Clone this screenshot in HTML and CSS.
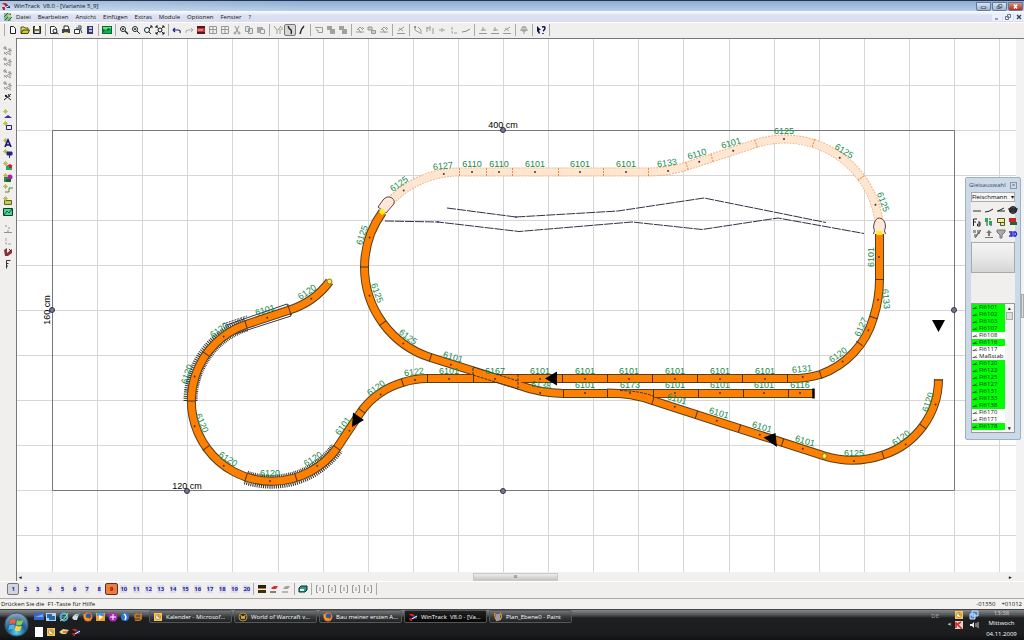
FILE: index.html
```
<!DOCTYPE html>
<html lang="de">
<head>
  <meta charset="UTF-8">
  <meta name="viewport" content="width=device-width, initial-scale=1.0">
  <title>WinTrack V8.0 - [Variante 5_9]</title>
  <link rel="stylesheet" href="styles.css">
</head>
<body>
  <header class="titlebar">
    <span class="icon" data-icon="app"></span>
    <h1>WinTrack&nbsp; V8.0 - [Variante 5_9]</h1>
    <div class="window-buttons">
      <button aria-label="Minimieren"><svg viewBox="0 0 14 9"><path d="M4 5h6v2H4z" fill="#fff" stroke="#445"/></svg></button>
      <button aria-label="Wiederherstellen"><svg viewBox="0 0 14 9"><path d="M6 2h4v4H6zM4 4h4v3H4z" fill="#fff" stroke="#445"/></svg></button>
      <button class="close" aria-label="Schließen"><svg viewBox="0 0 14 9"><path d="M5 2l4 5M9 2l-4 5" stroke="#fff" stroke-width="2"/></svg></button>
    </div>
  </header>

  <nav class="menubar">
    <span class="icon" data-icon="doc"></span>
    <a href="#">Datei</a>
    <a href="#">Bearbeiten</a>
    <a href="#">Ansicht</a>
    <a href="#">Einfügen</a>
    <a href="#">Extras</a>
    <a href="#">Module</a>
    <a href="#">Optionen</a>
    <a href="#">Fenster</a>
    <a href="#">?</a>
    <div class="mdi-buttons">
      <button aria-label="Fenster minimieren"><svg viewBox="0 0 10 8"><path d="M3 6h3" stroke="#456"/></svg></button>
      <button aria-label="Fenster wiederherstellen"><svg viewBox="0 0 10 8"><path d="M4.500 1.500h3v3h-3zM2.500 3.500h3v3h-3z" fill="#eef" stroke="#678"/></svg></button>
      <button aria-label="Fenster schließen"><svg viewBox="0 0 10 8"><path d="M3 2l4 4M7 2l-4 4" stroke="#345" stroke-width="1.300"/></svg></button>
    </div>
  </nav>

  <div class="toolbar" id="toolbar"></div>

  <main class="workspace">
    <div class="sidebar" id="sidebar"></div>
    <div class="view">
      <svg class="plan" viewBox="17 39 999 533" preserveAspectRatio="xMinYMin slice">
        <path id="grid" class="grid"/>
        <path class="frame" d="M52.500 130.500H954.500V490.500H52.500Z"/>

        <!-- Tunnelstrecke -->
        <g class="tunnel">
          <path class="edge" d="M387 205A95 95 0 0 1 459 172H648A125 125 0 0 0 687 166L756 143.500A95 95 0 0 1 879.500 226"/>
          <path class="fill" d="M387 205A95 95 0 0 1 459 172H648A125 125 0 0 0 687 166L756 143.500A95 95 0 0 1 879.500 226"/>
        </g>

        <!-- Böschung und Brücke -->
        <path class="slope" d="M190.500 401A80.500 80.500 0 0 1 246 324.500M246 477.500A80.500 80.500 0 0 0 337 448"/>
        <path class="bridge" d="M225 325.500L287 304L290 306M235 334L291 316L290 313"/>
        <path class="bridge" d="M223 324l24-8M287 305l5 11" stroke-dasharray="2 1"/>

        <g class="track">
          <path class="edge" d="M607 393Q632 393 652.500 400.500L824.500 456A95 95 0 0 0 883 455A80 80 0 0 0 938.500 379"/>
          <path class="edge" d="M382.500 212A95 95 0 0 0 364.500 267A95 95 0 0 0 430.500 357.500L518 385Q540 393 563.500 393.500H813"/>
          <path class="edge" d="M879.500 233V279.500A125 125 0 0 1 873.500 317.500A85 85 0 0 1 820.500 374.500A107 107 0 0 1 787.500 378.500H427.500A80 80 0 0 0 402.500 382.500A80 80 0 0 0 361.500 411L337 448A80.500 80.500 0 1 1 246 324.500L289.500 310A80 80 0 0 0 329.500 281.500"/>
          <path class="fill" d="M607 393Q632 393 652.500 400.500L824.500 456A95 95 0 0 0 883 455A80 80 0 0 0 938.500 379"/>
          <path class="fill" d="M382.500 212A95 95 0 0 0 364.500 267A95 95 0 0 0 430.500 357.500L518 385Q540 393 563.500 393.500H813"/>
          <path class="fill" d="M879.500 233V279.500A125 125 0 0 1 873.500 317.500A85 85 0 0 1 820.500 374.500A107 107 0 0 1 787.500 378.500H427.500A80 80 0 0 0 402.500 382.500A80 80 0 0 0 361.500 411L337 448A80.500 80.500 0 1 1 246 324.500L289.500 310A80 80 0 0 0 329.500 281.500"/>
        </g>
        <path class="switch" d="M473 367l45 14M473 375l45 14M473 375l0-8M518 374v14M620 390.500Q640 391 653 396"/>
        <path class="terrain" d="M447 208l69 9l102-6l86-13l122 24.500"/>
        <path class="terrain" d="M385 221l53 1l81 9.500l113-9.500l70 7.500l76-11.500l86 15.500"/>
        <circle cx="438" cy="222" r="1" fill="#33a"/>
        <circle cx="516" cy="217" r="1" fill="#33a"/>

        <g id="joints" class="joints"></g>
        <g id="labels" class="labels"></g>

        <g class="portal">
          <path d="M378 207l5-7q4-5 9-2q4 3 1 7l-7 8z"/>
          <path d="M873.500 234q2-3 0-7q1-9 6-9q6 1 6 9q-2 4 0 7"/>
        </g>
        <path d="M379 212l3-4l4 4l-4 3zM876 231h7l-1 4h-5z" fill="#ffee20"/>
        <circle class="end" cx="329.500" cy="281.500" r="2.500"/>
        <circle class="end" cx="824.500" cy="456" r="2.500"/>
        <path d="M545 378.500l12-7v14zM353 412.500l11 7.500l-12 7zM763.500 437.500l12-4.500l1.500 14zM932 320h13l-6.500 12z"/>
        <path d="M813.500 388.500v10" stroke="#000" stroke-width="2.500"/>
        <g class="handles">
          <circle cx="503" cy="130" r="2.500"/>
          <circle cx="503" cy="491" r="2.500"/>
          <circle cx="187" cy="491" r="2.500"/>
          <circle cx="52" cy="310" r="2.500"/>
          <circle cx="954" cy="310" r="2.500"/>
        </g>
        <g class="dims">
          <text x="503" y="128">400 cm</text>
          <text x="187" y="489">120 cm</text>
          <text transform="translate(50 310) rotate(-90)">160 cm</text>
        </g>
      </svg>
      <div class="vscroll"><i></i></div>
      <div class="hscroll"><b>◂</b><i>III</i><b>▸</b></div>
    </div>

    <section class="palette">
      <div class="palette-title"><h2>Gleisauswahl</h2><button aria-label="Auswahl schließen">×</button></div>
      <div class="palette-body">
        <div class="combo">
          <select aria-label="Gleissystem"><option>Fleischmann F</option></select>
        </div>
        <div class="palette-tools" id="paletteTools"></div>
        <div class="preview"></div>
        <div class="list">
          <ul id="trackList"></ul>
          <div class="list-scroll"><b>▴</b><i></i><b>▾</b></div>
        </div>
      </div>
    </section>
  </main>

  <div class="toolbar layers">
    <div class="layer-buttons" id="layerButtons"></div>
    <div class="tool-group" id="layerTools"></div>
  </div>

  <footer class="status">
    <span>Drücken Sie die &nbsp;F1-Taste für Hilfe</span>
    <span class="coord">-01350</span>
    <span class="coord">+01012</span>
  </footer>

  <div class="taskbar">
    <button class="start" aria-label="Start">
      <svg viewBox="0 0 24 24">
        <defs><radialGradient id="orb" cx="50%" cy="85%" r="80%"><stop offset="0" stop-color="#4fd8f8"/><stop offset=".5" stop-color="#1c5f94"/><stop offset="1" stop-color="#8aa4b8"/></radialGradient></defs>
        <circle cx="12" cy="12" r="11" fill="url(#orb)" stroke="#385870"/>
        <path d="M6 8q3-2 5.500-.500l-1 4q-2.500-1-5.500.500z" fill="#f06030"/>
        <path d="M12.500 8q3 1.500 6-.500l-1.500 4.500q-2.500 1.500-5.500 0z" fill="#90d040"/>
        <path d="M5 13q3-1.500 5.500-.500l-1 4.500q-3-1.500-5.500.500z" fill="#50b0f0"/>
        <path d="M11.500 13q2.500 1.500 5.500.500l-1.500 4.500q-3 1-5.500-.500z" fill="#ffd040"/>
      </svg>
    </button>
    <div class="quick" id="quick"></div>
    <div class="tasks">
      <button><span class="icon" data-icon="outlook"></span><span>Kalender - Microsof...</span></button>
      <button><span class="icon" data-icon="wow"></span><span>World of Warcraft v...</span></button>
      <button><span class="icon" data-icon="firefox"></span><span>Bau meiner ersten A...</span></button>
      <button class="active"><span class="icon" data-icon="app"></span><span>WinTrack&nbsp; V8.0 - [Va...</span></button>
      <button><span class="icon" data-icon="paint"></span><span>Plan_Ebene0 - Paint</span></button>
    </div>
    <span class="lang">DE</span>
    <button class="tray-more" aria-label="Weitere Symbole">&lt;</button>
    <div class="tray">
      <span class="icon" data-icon="outlook"></span>
      <span class="icon" data-icon="net"></span>
      <span class="icon" data-icon="av"></span>
      <span class="icon" data-icon="sound"></span>
    </div>
    <div class="clock"><span>13:38</span><span>Mittwoch</span><span>04.11.2009</span></div>
  </div>
  <script src="script.js"></script>
</body>
</html>
```
FILE: styles.css
```
:root {
  --face: #f0efee;
  --line: #a9a9a9;
  --track: #ff8000;
}
* {
  box-sizing: border-box;
}
body {
  margin: 0;
  height: 100vh;
  display: flex;
  flex-direction: column;
  overflow: hidden;
  background: var(--face);
  color: #111;
  font-family: "Open Sans", sans-serif;
  font-size: 6px;
  line-height: 8px;
}
button {
  font: inherit;
  padding: 0;
  border: none;
  background: none;
  color: inherit;
}
h1, h2 {
  margin: 0;
  font-size: inherit;
  font-weight: normal;
}
svg {
  display: block;
}
.icon svg {
  width: 10px;
  height: 10px;
}
.titlebar {
  display: flex;
  align-items: center;
  gap: 3px;
  height: 11px;
  padding: 0 1px;
  border-top: 1px solid #27344f;
  background: linear-gradient(90deg, rgba(255,255,255,0.3), transparent 30%), linear-gradient(#8eabd0, #b4cfea);
}
.window-buttons {
  display: flex;
  gap: 1px;
  margin-left: auto;
}
.window-buttons button {
  width: 15px;
  height: 9px;
  border: 1px solid #60789a;
  border-radius: 0 0 2px 2px;
  background: linear-gradient(#d5e2f1, #9eb7d2);
}
.window-buttons .close {
  background: linear-gradient(#dd9383, #b52c18);
}
.window-buttons svg {
  width: 100%;
  height: 100%;
}
.menubar {
  display: flex;
  align-items: center;
  gap: 7px;
  height: 11px;
  padding-left: 3px;
  background: linear-gradient(#fff, #dbe0f2 40%, #d8ddef);
}
.menubar .icon {
  margin-right: -4px;
}
.menubar a {
  color: #111;
  text-decoration: none;
}
.mdi-buttons {
  display: flex;
  gap: 1px;
  margin-left: auto;
}
.mdi-buttons button {
  width: 10px;
  height: 8px;
  background: #e9f0fa;
}
.toolbar {
  display: flex;
  align-items: center;
  height: 16px;
  padding: 0 0 1px 4px;
  border-top: 1px solid #fff;
}
.tool-group {
  display: flex;
  padding: 0 2px;
  border-left: 1px solid var(--line);
}
.toolbar > .tool-group:last-child {
  border-right: 1px solid var(--line);
}
.tool {
  display: flex;
  align-items: center;
  justify-content: center;
  width: 12px;
  height: 12px;
}
.tool svg {
  width: 10px;
  height: 10px;
}
.tool.off {
  filter: grayscale(1);
  opacity: 0.5;
}
.tool.pressed {
  border: 1px solid #777;
  border-radius: 2px;
  background: #d7d7d7;
}
.workspace {
  flex: 1;
  display: flex;
  min-height: 0;
  position: relative;
}
.sidebar {
  display: flex;
  flex-direction: column;
  gap: 5px;
  width: 16px;
  padding: 7px 0 0 1px;
}
.side-group {
  display: flex;
  flex-direction: column;
}
.side-group .tool {
  flex: 1;
  width: 14px;
  min-height: 0;
}
.g1 { height: 58px; }
.g2 { height: 24px; }
.g3 { height: 81px; }
.g4 { height: 47px; }
.view {
  flex: 1;
  display: grid;
  grid-template-columns: 1fr 8px;
  grid-template-rows: 1fr 9px;
  min-width: 0;
  border-top: 1px solid #777;
  border-left: 1px solid #777;
}
.plan {
  width: 100%;
  height: 100%;
  min-height: 0;
  background: #fff;
}
.grid {
  fill: none;
  stroke: #d6d6d6;
}
.frame {
  fill: none;
  stroke: #777;
}
.track path, .tunnel path {
  fill: none;
}
.track .edge {
  stroke: #54401f;
  stroke-width: 9;
}
.track .fill {
  stroke: var(--track);
  stroke-width: 7;
}
.tunnel .edge {
  stroke: #f5b48a;
  stroke-width: 9;
  stroke-dasharray: 2 1;
}
.tunnel .fill {
  stroke: #ffe6d0;
  stroke-width: 7;
}
.slope {
  fill: none;
  stroke: #333;
  stroke-width: 14;
  stroke-dasharray: 1 1;
}
.bridge, .switch, .terrain {
  fill: none;
  stroke: #334;
}
.switch {
  stroke-dasharray: 3 1;
}
.terrain {
  stroke-dasharray: 9 1;
}
.joints line {
  stroke: #432;
}
.joints .hidden {
  stroke: #ee8844;
  stroke-dasharray: 2 1;
}
.labels text {
  font: 9px "Liberation Sans", sans-serif;
  fill: #14894a;
  text-anchor: middle;
}
.labels circle {
  fill: #433;
}
.portal path {
  fill: #ffe8da;
  stroke: #544;
}
.end {
  fill: #ffee20;
  stroke: #775;
}
.handles circle {
  fill: #77779a;
  stroke: #334;
}
.dims text {
  font: 9px "Liberation Sans", sans-serif;
  text-anchor: middle;
}
.vscroll {
  display: flex;
  align-items: center;
  justify-content: flex-end;
  background: #f3f3f3;
}
.vscroll i {
  width: 3px;
  height: 24px;
  border: 1px solid #aaa;
  background: #ddd;
}
.hscroll {
  grid-column: 1 / 3;
  display: flex;
  align-items: center;
  justify-content: space-between;
  padding: 0 12px 0 2px;
  background: #f0f0f0;
}
.hscroll i {
  width: 85px;
  height: 8px;
  border: 1px solid #c8c8c8;
  background: linear-gradient(#eee, #c4c4c4);
  font-style: normal;
  font-size: 4px;
  line-height: 6px;
  text-align: center;
}
.hscroll b {
  font-size: 5px;
}
.palette {
  position: absolute;
  top: 139px;
  right: 3px;
  width: 56px;
  height: 263px;
  padding: 0 5px 6px;
  display: flex;
  flex-direction: column;
  border: 1px solid #9fb0c4;
  border-radius: 2px;
  background: #cbd9e9;
}
.palette-title {
  display: flex;
  align-items: center;
  justify-content: space-between;
  height: 14px;
  margin: 0 -2px;
  color: #445;
}
.palette-title button {
  width: 7px;
  height: 7px;
  border: 1px solid #8896a8;
  line-height: 5px;
}
.palette-body {
  flex: 1;
  display: flex;
  flex-direction: column;
  min-height: 0;
  background: var(--face);
}
.combo {
  position: relative;
}
.combo::after {
  content: "▾";
  position: absolute;
  right: 1px;
  top: 1px;
}
.combo select {
  display: block;
  appearance: none;
  width: 100%;
  height: 10px;
  padding: 0 6px 0 0;
  border: 1px solid #aaa;
  border-radius: 0;
  background: #f5f5f5;
  font: inherit;
  overflow: hidden;
}
.palette-tools {
  display: grid;
  grid-template-columns: repeat(4, 1fr);
  justify-items: center;
  padding-top: 2px;
}
.preview {
  height: 31px;
  margin-top: 2px;
  border: 1px solid #aaa;
  background: linear-gradient(#f4f4f4, #e8e8e8 50%, #d5d5d5);
}
.list {
  flex: 1;
  display: flex;
  min-height: 0;
  margin-top: 30px;
  border: 1px solid #999;
  background: #fff;
}
.list ul {
  flex: 1;
  margin: 0;
  padding: 0;
  list-style: none;
  overflow: hidden;
}
.list li {
  display: flex;
  align-items: center;
  gap: 1px;
  height: 7px;
  line-height: 7px;
}
.list li svg {
  width: 6px;
  height: 6px;
}
.list .used {
  background: #0f0;
  color: #032;
}
.list-scroll {
  display: flex;
  flex-direction: column;
  align-items: center;
  width: 9px;
  background: #f4f4f4;
}
.list-scroll i {
  width: 7px;
  height: 8px;
  margin-bottom: auto;
  border: 1px solid #aaa;
  background: #ddd;
}
.list-scroll b {
  font-size: 5px;
}
.layers {
  height: 17px;
  padding-bottom: 2px;
}
.layers .tool-group {
  border-right: 0;
}
.layer-buttons {
  display: grid;
  grid-template-columns: repeat(20, 1fr);
  width: 246px;
  margin-left: 3px;
}
.layer-buttons button {
  height: 12px;
  border: 1px solid transparent;
  border-radius: 2px;
  color: #2424a0;
  font-weight: bold;
  line-height: 9px;
}
.layer-buttons button span {
  background: #dcdcec;
}
.layer-buttons .shown {
  border-color: #777;
  background: #d4d4e0;
}
.layer-buttons .current {
  border-color: #533;
  background: #f07c3c;
  color: #900;
}
.layer-buttons .current span, .layer-buttons .shown span {
  background: none;
}
.status {
  display: flex;
  align-items: center;
  gap: 6px;
  height: 11px;
  padding: 0 2px 0 1px;
  border-top: 1px solid #aaa;
  background: #f2f1f0;
}
.status .coord:nth-child(2) {
  margin-left: auto;
}
.taskbar {
  display: flex;
  height: 31px;
  padding-left: 4px;
  border-top: 1px solid #444;
  background: linear-gradient(#85898b, #505355 5px, #1d1f21 8px, #1b1d1f 80%, #101112);
  color: #fff;
}
.start {
  width: 25px;
  height: 25px;
  margin-top: 2px;
}
.quick {
  display: grid;
  grid-template-columns: repeat(9, 1fr);
  grid-auto-rows: 15px;
  justify-items: center;
  align-items: center;
  width: 111px;
  margin: -1px 0 0 4px;
}
.tasks {
  display: flex;
  align-items: flex-start;
  gap: 2px;
  margin-left: 5px;
}
.tasks button {
  display: flex;
  align-items: center;
  gap: 3px;
  width: 83px;
  height: 13px;
  padding-left: 3px;
  border: 1px solid #55585a;
  border-radius: 2px;
  background: linear-gradient(#737678, #3b3d3f 50%, #202224);
  white-space: nowrap;
}
.tasks .active {
  background: linear-gradient(#222, #050505);
}
.lang {
  margin: 2px 8px 0 auto;
  color: #a4a4a4;
}
.tray-more {
  width: 5px;
  height: 8px;
  margin: 10px 2px 0 0;
  font-weight: bold;
  line-height: 8px;
}
.tray {
  display: grid;
  grid-template-columns: 15px 15px;
  grid-auto-rows: 10px;
}
.clock {
  display: flex;
  flex-direction: column;
  gap: 3px;
  align-items: center;
  width: 35px;
  margin-right: 5px;
}
.clock span:first-child {
  color: #d4d4d4;
  line-height: 6px;
}
```
FILE: script.js
```
// icons, drawn on a 10 x 10 field
const spark = '<path d="M0 2.500h5M2.500 0v5M1 1l3 3M4 1L1 4" stroke="#b4b838" stroke-width=".8"/>';
const icons = {
  app: '<path d="M1 2h4l2 2H3z" fill="#d22"/><path d="M4 4h5v3H5z" fill="#223a8c"/><path d="M2 8l7-4" stroke="#fff"/><path d="M1 6h3v3H2z" fill="#b22"/>',
  doc: '<path d="M1 1h7v8H1z" fill="#8ab89a"/><path d="M2 8l6-6M1 5l4-4M5 9l4-4" stroke="#174"/><path d="M5 3h3v2H5z" fill="#ec3"/>',
  new: '<path d="M2.500 1.500h3l2 2v5h-5z" fill="#fff" stroke="#222"/>',
  open: '<path d="M1 8V2h3l1 1h3v2" fill="#dd7" stroke="#551"/><path d="M1 8.500L3 5h6.500L8 8.500z" fill="#cc3" stroke="#440"/>',
  save: '<path d="M1.500 1.500h7v7h-7z" fill="#78763c" stroke="#222"/><path d="M3 1h4v3H3z" fill="#fff"/><path d="M3 6h4v2H3z" fill="#dde"/>',
  preview: '<path d="M1.500 1.500h4l2 2v5h-6z" fill="#fff" stroke="#333"/><circle cx="6" cy="6" r="2" fill="#dff" stroke="#222"/><path d="M7 7l2.500 2" stroke="#222"/>',
  print: '<path d="M3 4V1h4l1 3" fill="#fff" stroke="#222"/><path d="M1 4h8v4H1z" fill="#444"/><path d="M3 7h4v1H3z" fill="#cc4"/>',
  copyview: '<path d="M1.500 4.500h5v4h-5z" fill="#fff" stroke="#333"/><path d="M3 3h4l2 5M5 1h3v3" fill="none" stroke="#345"/>',
  book: '<path d="M2 1h6v8H2z" fill="#35386c"/><path d="M4 2h3v2H4zM4 5h3v2H4z" fill="#b8bce8"/>',
  picture: '<path d="M0 1h10v8H0z" fill="#086838"/><path d="M1 2h8v2L6 3 4 5 1 4z" fill="#5eea80"/><path d="M1 7l3-2 2 1 3-2v4H1z" fill="#18b048"/>',
  zoomout: '<circle cx="4" cy="4" r="2.500" fill="#eff" stroke="#222"/><path d="M3 4h2M6 6l3 3" stroke="#222" stroke-width="1.400"/>',
  zoomin: '<circle cx="4" cy="4" r="2.500" fill="#eff" stroke="#222"/><path d="M3 4h2M4 3v2M6 6l3 3" stroke="#222"/>',
  zoomwin: '<circle cx="4" cy="5" r="2.500" fill="#eff" stroke="#222"/><path d="M6 7l2 2M7 1h2v2M6 4l3-3" fill="none" stroke="#222"/>',
  zoomall: '<path d="M1 1l8 8M9 1L1 9M1 3V1h2M7 1h2v2M1 7v2h2M9 7v2H7" stroke="#222" fill="none"/><circle cx="5" cy="5" r="2" fill="#eee" stroke="#222"/>',
  undo: '<path d="M1 5h5q3 0 2 3M1 5l2-2M1 5l2 2" fill="none" stroke="#228" stroke-width="1.200"/>',
  redo: '<path d="M9 5H4q-3 0-2 3M9 5L7 3M9 5L7 7" fill="none" stroke="#666"/>',
  trackset: '<path d="M1 1h8v8H1z" fill="#b33"/><path d="M1 2h8M1 8h8" stroke="#311" stroke-width="1.500"/><path d="M2 5h5" stroke="#fcc"/>',
  table: '<path d="M1.500 1.500h7v7h-7zM1 4.500h8M5 1v8" fill="none" stroke="#444"/>',
  cut: '<path d="M3 1l3 6M7 1L4 7" stroke="#333"/><circle cx="3" cy="8" r="1" fill="none" stroke="#333"/><circle cx="7" cy="8" r="1" fill="none" stroke="#333"/>',
  copy: '<path d="M1.500 1.500h4v5h-4zM4.500 3.500h4v5h-4z" fill="#ddd" stroke="#444"/>',
  paste: '<path d="M1 2h6v6H1z" fill="#666"/><path d="M4.500 4.500h4v4h-4z" fill="#eee" stroke="#444"/>',
  switchl: '<path d="M1 1l3 4v4M8 1L5 5M7 4v5M9 2v3" fill="none" stroke="#444"/>',
  curve: '<path d="M3 1q1 3 3 4q1 2 0 4" fill="none" stroke="#222" stroke-width="1.400"/>',
  curve2: '<path d="M3 9q1-5 4-8" fill="none" stroke="#222" stroke-width="1.400"/>',
  box: '<path d="M1 2.500h7.500v5H4V5H2" fill="none" stroke="#444"/>',
  stack: '<path d="M1 1h5v4H1zM4 4h5v5H4z" fill="#555"/>',
  mix: '<path d="M1 7h8M2 5l3-3 3 3M7 2l2 2M3 3l3 5" fill="none" stroke="#444"/>',
  mix2: '<path d="M1 2h4v3H1zM4.500 5.500h4v3h-4z" fill="#aaa" stroke="#444"/>',
  level: '<path d="M1 8.500h8M2 6l6-4M3 3l4 3" stroke="#444"/>',
  nodes: '<path d="M2 2v3l5 3M5 2l3 3v4" fill="none" stroke="#444"/><circle cx="2" cy="2" r="1"/>',
  poles: '<path d="M2 2v5M5 1v5M8 3v6M1 3h4" fill="none" stroke="#444"/>',
  cross: '<path d="M5 3v4M2 5h6" stroke="#555"/>',
  corner: '<path d="M3 2v6h5" fill="none" stroke="#555" stroke-dasharray="3 1"/>',
  profile: '<path d="M1 8.500h8M5 2v4M3 5h5" stroke="#444"/>',
  move: '<path d="M5 1v8M1 5h8M3 2h4v4H3z" fill="none" stroke="#444"/>',
  help: '<path d="M1 1l4 4-2 0 1 3-1 1-2-3z" fill="#115"/><path d="M6 2q3-1 3 1t-2 3M7 8v1" fill="none" stroke="#115" stroke-width="1.500"/>',
  star: '<path d="M0 2h4M2 0v4M1 1l3 3M5 3l4 2M4 7l4 2M7 2v6M1 6l3 3M1 8l7-4" stroke="#444"/>',
  pen: '<path d="M1 8L8 2M2 3l6 5M5 2l2 3" stroke="#222"/><circle cx="3" cy="4" r="1"/>',
  starline: spark + '<path d="M1 9l4-3 4 3z" fill="#33a"/>',
  starbox: spark + '<path d="M3.500 4.500h5v4h-5z" fill="#eee" stroke="#226"/>',
  text: spark + '<path d="M2 9L5 2l3 7M3 7h4" fill="none" stroke="#117" stroke-width="1.600"/>',
  pin: spark + '<path d="M4 3h5v3H4zM6.500 6v3" fill="#228" stroke="#228"/>',
  house: spark + '<path d="M3 5l4-2 3 2z" fill="#c22"/><path d="M3 5h6v4H3z" fill="#2a6"/><path d="M6 5h3v2H6z" fill="#c22"/>',
  flower: spark + '<path d="M1 4h5v5H1z" fill="#384"/><circle cx="7" cy="4" r="2.500" fill="#a2a"/><path d="M3 6h5v3H3z" fill="#163"/>',
  step: spark + '<path d="M2 8h4V4h4" fill="none" stroke="#583"/>',
  folder: '<path d="M1.500 4.500h7v4h-7z" fill="#cc4" stroke="#562"/>' + spark,
  map: '<path d="M.500 1.500h9v7h-9z" fill="#5c9" stroke="#042"/><path d="M1 8l3-4 2 2 3-4" fill="none" stroke="#063"/>',
  dots: '<path d="M3 1v2M6 3v2M1 8.500h8M5 6v2" stroke="#333"/>',
  brick: '<path d="M1 3l3-2v5l5-4v4L5 9H2z" fill="#833"/><path d="M6 2l2 2" stroke="#222"/>',
  ruler: '<path d="M3.500 9.500v-8h4M3.500 4.500h2M3.500 7h1.500" fill="none" stroke="#333"/>',
  straight: '<path d="M1 6h8" stroke="#333"/>',
  bend: '<path d="M1 7q4 0 8-3" fill="none" stroke="#222"/>',
  turnout: '<path d="M1 6h8M2 6l6-3" fill="none" stroke="#222"/>',
  turntable: '<circle cx="5" cy="5" r="3.500" fill="#555" stroke="#222"/><path d="M0 4h10M1 6h8" stroke="#111"/>',
  fa: '<path d="M1.500 9V2H5M1 5h3M6 5h2v4H5.500V7H8" fill="none" stroke="#222"/>',
  tree: '<path d="M1 1h3v4H1zM5 4h3v4H5z" fill="#2a5"/><path d="M3 5v4M7 8v1M5 2h2" stroke="#143"/>',
  windows: '<path d="M1.500 1.500h7v4h-7zM4.500 5.500h4v3h-4z" fill="#ee9" stroke="#552"/>',
  redgreen: '<path d="M1 1h7v4H1z" fill="#c22"/><path d="M2 5h7v3H2z" fill="#263"/>',
  brush: '<path d="M1 1h3v3H1zM5 1h3v4H5zM2 5h3v3H2z" fill="#999"/><path d="M3 9l6-8" stroke="#555"/>',
  up: '<path d="M1 8h8v1H1zM4 7V4H2l3-3 3 3H6v3z" fill="#777"/>',
  down: '<path d="M1 1h8v2L6 6v3H4V6L1 3z" fill="#aaa" stroke="#777"/>',
  three: '<path d="M1 3h3v4H1M2 5h2M6 3h1.500q2 2 0 4H6z" fill="none" stroke="#22c" stroke-width="1.400"/>',
  layers: '<path d="M1 1h8v3H1z" fill="#221"/><path d="M1 4h8v1H1z" fill="#d62"/><path d="M1 6h8v3H1z" fill="#331"/>',
  flag: '<path d="M2 4l3-2h4L7 5H3z" fill="#c33"/><path d="M1 8h6" stroke="#111"/>',
  cube: '<path d="M1 4l2-2h6v4L7 8H1z" fill="#2a9d8a" stroke="#123"/><path d="M2 5h4v2H2z" fill="#cfe"/>',
  brackets: '<path d="M3 1.500H1.500v7H3M7 1.500h1.500v7H7M5 3v4" fill="none" stroke="#444"/>',
  outlook: '<path d="M1 1h8v8H1z" fill="#f3c661"/><circle cx="5" cy="5" r="2.500" fill="#fff" stroke="#c80"/><path d="M5 3v2h2" stroke="#864" fill="none"/>',
  wow: '<circle cx="5" cy="5" r="4" fill="#332a18" stroke="#b8923c"/><path d="M3 3l1 4 1-3 1 3 1-4" fill="none" stroke="#e0b950"/>',
  firefox: '<circle cx="5" cy="5" r="4.500" fill="#f07818"/><circle cx="5.500" cy="4" r="2.500" fill="#2858b0"/><path d="M1 2q0 6 5 5" fill="none" stroke="#ffc030"/>',
  paint: '<path d="M3 2h4v6q-2 2-4 0z" fill="#99a"/><path d="M2 1q-1 4 2 8M7 1q3 3 0 7" fill="none" stroke="#e09a30" stroke-width="1.300"/>',
  net: '<path d="M3 1h6v5H3zM1 4h5v5H1z" fill="#3b91d0" stroke="#ddf"/>',
  av: '<path d="M1 1h8v8H1z" fill="#d6d6d6"/><path d="M2 2v6M2 5l5-3M3 4l5 5" stroke="#d22" stroke-width="1.600"/>',
  sound: '<path d="M1 4h2l2-2v6L3 6H1z" fill="#eee"/><path d="M7 3v4M9 2v6" stroke="#ccc"/>',
  desktop: '<path d="M0 1h10v7H0z" fill="#3468c8"/><path d="M1 5l8-3v3z" fill="#78a6f0"/>',
  switcher: '<path d="M0 1h10v8H0z" fill="#b8d4ec"/><path d="M1 2h5v4H1zM3 4h6v4H3z" fill="#2868a8"/>',
  ie: '<circle cx="5" cy="5" r="3.500" fill="none" stroke="#46b8ee" stroke-width="1.800"/><path d="M2 5h6" stroke="#46b8ee"/><path d="M1 9q6-2 8-8" stroke="#d8e050" fill="none"/>',
  bird: '<path d="M1 6q3-5 7-4L6 8H3z" fill="#d3dce8"/><path d="M5 4l4-3" stroke="#68a"/>',
  media: '<path d="M0 1h9v8H0z" fill="#f0a030"/><path d="M1 1h7v3H1z" fill="#4898d0"/><path d="M3 3l4 2-4 3z" fill="#fff"/>',
  magenta: '<circle cx="5" cy="5" r="4.500" fill="#b028b8"/><path d="M2 5h6M5 2v6" stroke="#fff"/>',
  globe: '<circle cx="5" cy="5" r="4" fill="#2c78d0"/><path d="M4 2q3 2 1 6" stroke="#fff" stroke-width="1.500" fill="none"/>',
  cat: '<path d="M1 3l2-2 3 1 3-1v6L7 9H2z" fill="#b87830"/><path d="M3 4h4M2 7h5" stroke="#331"/>',
  page: '<path d="M1 0h8v10H1z" fill="#fff"/>',
  fish: '<path d="M0 5l4-3 6 1-3 4H3z" fill="#e8d090"/><path d="M4 5h5" stroke="#b22"/>'
};

function svg(name) {
  return '<svg viewBox="0 0 10 10">' + icons[name] + '</svg>';
}

// a leading "-" is a disabled tool, a leading "!" a pressed one
function tool(entry) {
  const name = entry.replace(/^[-!]/, '');
  const state = entry[0] === '-' ? ' off' : entry[0] === '!' ? ' pressed' : '';
  return '<button class="tool' + state + '" aria-label="' + name + '">' + svg(name) + '</button>';
}

function tools(list) {
  return list.split(' ').map(tool).join('');
}

document.querySelectorAll('[data-icon]').forEach(el => {
  el.innerHTML = svg(el.dataset.icon);
});

document.getElementById('toolbar').innerHTML = [
  'new open save',
  'preview print copyview book',
  'picture',
  'zoomout zoomin zoomwin zoomall',
  'undo -redo trackset -table -table -cut -copy -paste',
  '-switchl !curve curve2',
  '-box -stack -stack',
  '-mix -mix2 -mix',
  '-level',
  '-nodes -poles -cross -corner -bend',
  '-profile -profile -level',
  '-move',
  'help'
].map(g => '<div class="tool-group">' + tools(g) + '</div>').join('');

document.getElementById('sidebar').innerHTML = [
  '-star -star -star -star pen',
  'starline starbox',
  'text pin house flower step folder map',
  '-dots -corner brick ruler'
].map((g, i) => '<div class="side-group g' + (i + 1) + '">' + tools(g) + '</div>').join('');

document.getElementById('paletteTools').innerHTML =
  tools('straight bend turnout turntable fa tree windows redgreen brush up down three');
document.getElementById('layerTools').outerHTML =
  ['layers flag -flag', 'cube', '-brackets -brackets -brackets -brackets -brackets']
    .map(g => '<div class="tool-group">' + tools(g) + '</div>').join('');

let layers = '';
for (let i = 1; i <= 20; i++) {
  const state = i === 1 ? 'shown' : i === 9 ? 'current' : '';
  layers += '<button class="' + state + '"><span>' + i + '</span></button>';
}
document.getElementById('layerButtons').innerHTML = layers;

document.getElementById('quick').innerHTML =
  'desktop switcher ie bird firefox media magenta globe cat page outlook fish app'.split(' ')
    .map(n => '<button class="tool" aria-label="' + n + '">' + svg(n) + '</button>').join('');

// track list, "*" = used in the plan
document.getElementById('trackList').innerHTML =
  ('*Fl6101 *Fl6102 *Fl6103 *Fl6107 Fl6108 *Fl6116 Fl6117 Maßstab *Fl6120 *Fl6122 *Fl6125 ' +
   '*Fl6127 *Fl6131 *Fl6133 *Fl6138 Fl6170 Fl6171 *Fl6178').split(' ')
    .map(n => '<li class="' + (n[0] === '*' ? 'used' : '') + '">' + svg('turnout') + n.replace('*', '') + '</li>').join('');

// grid
let d = '';
for (let i = -1; i < 22; i++) d += 'M' + Math.round(52 + i * 45.1) + '.5 39V640';
for (let i = -1; i < 10; i++) d += 'M0 ' + (130 + i * 45) + '.5H1100';
document.getElementById('grid').setAttribute('d', d);

// track numbers: x, y, angle, number
const labels = [
  [307,292,-33,6120], [265,310,-16,6101], [219,330,-36,6120], [187,374,-72,6120],
  [202,423,66,6120], [228,459,32,6120], [270,473,0,6120], [313,459,-32,6120],
  [343,426,-54,6101], [376,388,-36,6120], [414,372,-8,6122], [449,371,0,6101],
  [495,371,0,6167], [540,371,0,6101], [585,371,0,6101], [629,371,0,6101],
  [675,371,0,6101], [720,371,0,6101], [765,371,0,6101], [802,369,-6,6131],
  [838,355,-36,6120], [861,327,-66,6127], [886,299,84,6133], [871,257,-90,6101],
  [883,202,70,6125], [844,151,32,6125], [784,131,0,6125], [731,143,-16,6101],
  [697,154,-16,6110], [667,163,-8,6133], [626,164,0,6101], [580,164,0,6101],
  [535,164,0,6101], [499,164,0,6110], [472,164,0,6110], [443,166,-6,6127],
  [399,184,-36,6125], [362,235,-72,6125], [377,293,70,6125], [408,337,36,6125],
  [453,357,16,6101], [541,385,6,6138], [585,385,0,6101], [630,385,0,6173],
  [675,385,0,6101], [720,385,0,6101], [764,385,0,6101], [800,385,0,6116],
  [677,399,16,6101], [719,413,16,6101], [762,427,16,6101], [805,441,16,6101],
  [854,453,0,6125], [901,438,-36,6120], [928,402,-72,6120]
];
document.getElementById('labels').innerHTML = labels.map(([x, y, a, n]) =>
  '<g transform="translate(' + x + ' ' + y + ') rotate(' + a + ')"><text y="3">' + n + '</text><circle cy="8" r="1"/></g>').join('');

// joints between two tracks: x, y, direction of the track, 1 = in the tunnel
const joints = [
  [289.5,310,-18], [246,324.5,-18], [206,354,-54], [191,401,90], [206,448,54],
  [246,477.5,18], [296,477.5,-18], [337,448,-54], [362,411,-54], [402.5,382.5,-18],
  [427.5,378.5,0], [473.5,378.5,0], [562.5,378.5,0], [607.5,378.5,0], [652.5,378.5,0],
  [697.5,378.5,0], [742.5,378.5,0], [787.5,378.5,0], [820.5,374.5,-18], [859.5,343.5,-54],
  [873.5,317.5,-72], [879.5,279.5,90], [364.5,267,90], [383,323,54], [430.5,357.5,18],
  [563.5,393.5,0], [607.5,393.5,0], [653.5,393.5,0], [698.5,393.5,0], [743.5,393.5,0],
  [788.5,393.5,0], [653,400.5,18], [696.5,414.5,18], [739.5,428.5,18], [782.5,442.5,18],
  [883,455,-18], [923,426.5,-54], [938.5,380,90],
  [459.5,172,0,1], [486.5,172,0,1], [512.5,172,0,1], [558.5,172,0,1], [603.5,172,0,1],
  [648.5,172,0,1], [687,166,-18,1], [712,158,-18,1], [756,143.5,-18,1], [813.5,143,18,1],
  [861,178,54,1]
];
document.getElementById('joints').innerHTML = joints.map(([x, y, a, hidden]) =>
  '<line y1="-4" y2="4" class="' + (hidden ? 'hidden' : '') + '" transform="translate(' + x + ' ' + y + ') rotate(' + a + ')"/>').join('');
```
